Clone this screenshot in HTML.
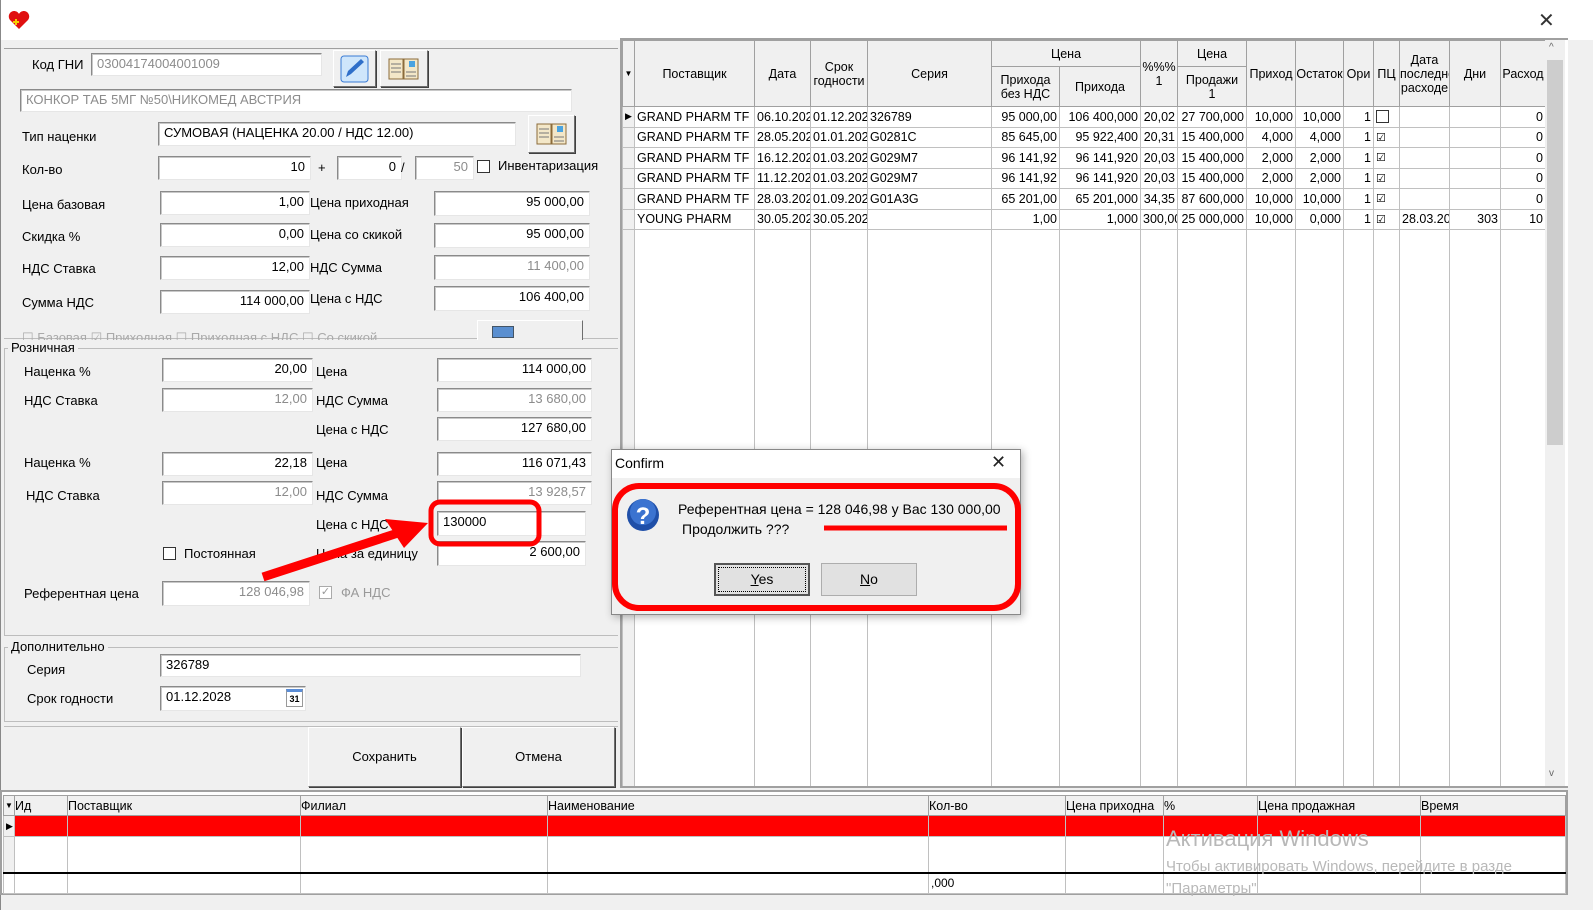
<!DOCTYPE html>
<html><head><meta charset="utf-8">
<style>
*{box-sizing:border-box;margin:0;padding:0}
body{width:1593px;height:910px;overflow:hidden;background:#f0f0f0;font-family:"Liberation Sans",Arial,sans-serif;font-size:13px;color:#000;position:relative}
.a{position:absolute;white-space:nowrap}
.in{position:absolute;background:#fff;border:1px solid;border-color:#8a8a8a #e6e6e6 #e6e6e6 #8a8a8a;box-shadow:inset 1px 1px 0 #c8c8c8;font-size:13px;line-height:20px;padding:0 5px;white-space:nowrap;overflow:hidden}
.r{text-align:right}
.g{color:#8c8c8c}
.lb{position:absolute;white-space:nowrap;font-size:13px}
.btn{position:absolute;background:#f0f0f0;border:1px solid;border-color:#fff #6e6e6e #6e6e6e #fff;box-shadow:1px 1px 0 #404040}
.cb{position:absolute;width:13px;height:13px;background:#fff;border:1px solid #333}
.grp{position:absolute;border:1px solid #bdbdbd;border-right:none}
.gl{position:absolute;background:#f0f0f0;padding:0 3px;font-size:13px}
table{border-collapse:collapse;position:absolute;table-layout:fixed;font-size:12.5px}
td{border:1px solid #c0c0c0;height:20.5px;padding:0 2px;overflow:hidden;white-space:nowrap}
th{border:1px solid #a0a0a0;background:#f0f0f0;font-weight:normal;text-align:center;overflow:hidden;white-space:nowrap;font-size:12.5px;line-height:14px}
</style></head><body>
<!-- title bar -->
<div class="a" style="left:0;top:0;width:1593px;height:40px;background:#fff"></div>
<div class="a" style="left:0;top:0;width:1px;height:910px;background:#888"></div>
<svg class="a" style="left:8px;top:10px" width="22" height="20" viewBox="0 0 22 20"><path d="M11 19 L2 10 C-1 6 2 1 6 1 C8 1 10 2 11 4 C12 2 14 1 16 1 C20 1 23 6 20 10 Z" fill="#e01010"/><path d="M5 12h6M8 9v6" stroke="#f5d000" stroke-width="2"/></svg>
<div class="a" style="left:1538px;top:8px;font-size:20px;color:#333">✕</div>

<!-- left panel -->
<div class="a" style="left:4px;top:48px;width:614px;height:740px;border-top:1px solid #a0a0a0"></div>
<div class="lb" style="left:32px;top:57px">Код ГНИ</div>
<div class="in g" style="left:91px;top:53px;width:231px;height:23px">03004174004001009</div>
<div class="btn" style="left:333px;top:50px;width:43px;height:37px"><svg width="41" height="35"><rect x="7" y="5" width="27" height="26" rx="3" fill="#cfe6fb" stroke="#3a7bd5"/><path d="M12 26 L14 20 L27 8 L30 11 L17 23 Z" fill="#2f6fc9"/></svg></div>
<div class="btn" style="left:380px;top:50px;width:48px;height:37px"><svg width="46" height="35"><path d="M8 8h14v20H8zM23 8h14v20H23z" fill="#f3e7c8" stroke="#8b6b3a"/><rect x="28" y="10" width="6" height="6" fill="#4aa3e0"/><path d="M10 13h10M10 17h10M10 21h10M25 21h10M25 25h10" stroke="#777"/></svg></div>
<div class="in g" style="left:20px;top:89px;width:552px;height:23px">КОНКОР ТАБ 5МГ №50\НИКОМЕД АВСТРИЯ</div>
<div class="lb" style="left:22px;top:129px">Тип наценки</div>
<div class="in" style="left:158px;top:122px;width:358px;height:24px">СУМОВАЯ (НАЦЕНКА 20.00 / НДС 12.00)</div>
<div class="btn" style="left:528px;top:115px;width:47px;height:38px"><svg width="45" height="36"><path d="M8 8h14v20H8zM23 8h14v20H23z" fill="#f3e7c8" stroke="#8b6b3a"/><rect x="28" y="10" width="6" height="6" fill="#4aa3e0"/><path d="M10 13h10M10 17h10M10 21h10M25 21h10M25 25h10" stroke="#777"/></svg></div>
<div class="lb" style="left:22px;top:162px">Кол-во</div>
<div class="in r" style="left:158px;top:156px;width:153px;height:24px">10</div>
<div class="lb" style="left:318px;top:160px">+</div>
<div class="in r" style="left:337px;top:156px;width:65px;height:24px">0</div>
<div class="lb" style="left:401px;top:160px">/</div>
<div class="in r g" style="left:415px;top:156px;width:59px;height:24px">50</div>
<div class="cb" style="left:477px;top:160px"></div>
<div class="lb" style="left:498px;top:158px">Инвентаризация</div>

<div class="lb" style="left:22px;top:197px">Цена базовая</div>
<div class="in r" style="left:160px;top:191px;width:150px;height:24px">1,00</div>
<div class="lb" style="left:310px;top:195px">Цена приходная</div>
<div class="in r" style="left:434px;top:191px;width:156px;height:25px">95 000,00</div>
<div class="lb" style="left:22px;top:229px">Скидка %</div>
<div class="in r" style="left:160px;top:223px;width:150px;height:24px">0,00</div>
<div class="lb" style="left:310px;top:227px">Цена со скикой</div>
<div class="in r" style="left:434px;top:223px;width:156px;height:25px">95 000,00</div>
<div class="lb" style="left:22px;top:261px">НДС Ставка</div>
<div class="in r" style="left:160px;top:256px;width:150px;height:24px">12,00</div>
<div class="lb" style="left:310px;top:260px">НДС Сумма</div>
<div class="in r g" style="left:434px;top:255px;width:156px;height:25px">11 400,00</div>
<div class="lb" style="left:22px;top:295px">Сумма НДС</div>
<div class="in r" style="left:160px;top:290px;width:150px;height:24px">114 000,00</div>
<div class="lb" style="left:310px;top:291px">Цена с НДС</div>
<div class="in r" style="left:434px;top:286px;width:156px;height:25px">106 400,00</div>
<!-- truncated row -->
<div class="a" style="left:4px;top:338px;width:614px;height:1px;background:#bdbdbd"></div>
<div class="a g" style="left:22px;top:330px;height:10px;overflow:hidden;width:460px;color:#aaa">☐ Базовая ☑ Приходная ☐ Приходная с НДС ☐ Со скикой</div>
<div class="btn" style="left:477px;top:320px;width:106px;height:20px;border-bottom:none;box-shadow:none"></div>
<div class="a" style="left:492px;top:326px;width:22px;height:12px;background:#5a8fd0;border:1px solid #456"></div>

<!-- Розничная -->
<div class="grp" style="left:4px;top:348px;width:614px;height:288px"></div>
<div class="gl" style="left:8px;top:340px">Розничная</div>
<div class="lb" style="left:24px;top:364px">Наценка %</div>
<div class="in r" style="left:162px;top:358px;width:151px;height:24px">20,00</div>
<div class="lb" style="left:316px;top:364px">Цена</div>
<div class="in r" style="left:437px;top:358px;width:155px;height:24px">114 000,00</div>
<div class="lb" style="left:24px;top:393px">НДС Ставка</div>
<div class="in r g" style="left:162px;top:388px;width:151px;height:24px">12,00</div>
<div class="lb" style="left:316px;top:393px">НДС Сумма</div>
<div class="in r g" style="left:437px;top:388px;width:155px;height:24px">13 680,00</div>
<div class="lb" style="left:316px;top:422px">Цена с НДС</div>
<div class="in r" style="left:437px;top:417px;width:155px;height:24px">127 680,00</div>
<div class="lb" style="left:24px;top:455px">Наценка %</div>
<div class="in r" style="left:162px;top:452px;width:151px;height:24px">22,18</div>
<div class="lb" style="left:316px;top:455px">Цена</div>
<div class="in r" style="left:437px;top:452px;width:155px;height:24px">116 071,43</div>
<div class="lb" style="left:26px;top:488px">НДС Ставка</div>
<div class="in r g" style="left:162px;top:481px;width:151px;height:24px">12,00</div>
<div class="lb" style="left:316px;top:488px">НДС Сумма</div>
<div class="in r g" style="left:437px;top:481px;width:155px;height:24px">13 928,57</div>
<div class="lb" style="left:316px;top:517px">Цена с НДС</div>
<div class="in" style="left:437px;top:511px;width:149px;height:25px">130000</div>
<div class="in r" style="left:437px;top:541px;width:149px;height:25px">2 600,00</div>
<div class="cb" style="left:163px;top:547px"></div>
<div class="lb" style="left:184px;top:546px">Постоянная</div>
<div class="lb" style="left:316px;top:546px">Цена за единицу</div>
<div class="lb" style="left:24px;top:586px">Референтная цена</div>
<div class="in r g" style="left:162px;top:581px;width:148px;height:25px">128 046,98</div>
<div class="cb" style="left:319px;top:586px;border-color:#aaa;color:#999;font-size:11px;line-height:11px;text-align:center">✓</div>
<div class="lb g" style="left:341px;top:585px;color:#999">ФА НДС</div>
<svg class="a" style="left:0;top:0" width="620" height="620"><rect x="431" y="502" width="108" height="42" rx="9" fill="none" stroke="#f00" stroke-width="5"/><path d="M263 577 L398 533" stroke="#f00" stroke-width="9"/><path d="M385 519 L428 523 L404 548 Z" fill="#f00"/></svg>

<!-- Дополнительно -->
<div class="grp" style="left:4px;top:647px;width:614px;height:75px"></div>
<div class="gl" style="left:8px;top:639px">Дополнительно</div>
<div class="lb" style="left:27px;top:662px">Серия</div>
<div class="in" style="left:160px;top:654px;width:421px;height:23px">326789</div>
<div class="lb" style="left:27px;top:691px">Срок годности</div>
<div class="in" style="left:160px;top:686px;width:146px;height:25px">01.12.2028</div>
<div class="a" style="left:286px;top:689px;width:17px;height:18px;background:#fff;border:1px solid #999;border-top:3px solid #5b8dd6;font-size:9px;font-weight:bold;text-align:center;line-height:14px">31</div>
<div class="a" style="left:4px;top:726px;width:614px;height:1px;background:#bdbdbd"></div>
<div class="btn" style="left:308px;top:727px;width:153px;height:60px;text-align:center;line-height:58px">Сохранить</div>
<div class="btn" style="left:462px;top:727px;width:153px;height:60px;text-align:center;line-height:58px">Отмена</div>

<!-- right grid -->
<div class="a" style="left:620px;top:38px;width:948px;height:750px;background:#fff;border:2px solid #a0a0a0;border-right:none"></div>
<table style="left:622px;top:40px;width:923px">
<colgroup><col style="width:12px"><col style="width:120px"><col style="width:56px"><col style="width:57px"><col style="width:124px"><col style="width:68px"><col style="width:81px"><col style="width:37px"><col style="width:69px"><col style="width:49px"><col style="width:48px"><col style="width:30px"><col style="width:26px"><col style="width:50px"><col style="width:51px"><col style="width:45px"></colgroup>
<tr style="height:26px"><th rowspan="2" style="font-size:8px">▼</th><th rowspan="2">Поставщик</th><th rowspan="2">Дата</th><th rowspan="2">Срок<br>годности</th><th rowspan="2">Серия</th><th colspan="2">Цена</th><th rowspan="2">%%%<br>1</th><th>Цена</th><th rowspan="2">Приход</th><th rowspan="2">Остаток</th><th rowspan="2">Ори</th><th rowspan="2">ПЦ</th><th rowspan="2">Дата<br>последне<br>расходе</th><th rowspan="2">Дни</th><th rowspan="2">Расход</th></tr>
<tr style="height:40px"><th>Прихода<br>без НДС</th><th>Прихода</th><th>Продажи<br>1</th></tr>
<tr><td style="font-size:9px;background:#f0f0f0">▶</td><td>GRAND PHARM TF</td><td>06.10.202</td><td>01.12.202</td><td>326789</td><td class="r" style="text-align:right">95 000,00</td><td style="text-align:right">106 400,000</td><td style="text-align:right">20,02</td><td style="text-align:right">27 700,000</td><td style="text-align:right">10,000</td><td style="text-align:right">10,000</td><td style="text-align:right">1</td><td><div class="cb" style="position:static"></div></td><td></td><td></td><td style="text-align:right">0</td></tr>
<tr><td style="background:#f0f0f0"></td><td>GRAND PHARM TF</td><td>28.05.202</td><td>01.01.202</td><td>G0281C</td><td style="text-align:right">85 645,00</td><td style="text-align:right">95 922,400</td><td style="text-align:right">20,31</td><td style="text-align:right">15 400,000</td><td style="text-align:right">4,000</td><td style="text-align:right">4,000</td><td style="text-align:right">1</td><td style="font-size:11px">☑</td><td></td><td></td><td style="text-align:right">0</td></tr>
<tr><td style="background:#f0f0f0"></td><td>GRAND PHARM TF</td><td>16.12.202</td><td>01.03.202</td><td>G029M7</td><td style="text-align:right">96 141,92</td><td style="text-align:right">96 141,920</td><td style="text-align:right">20,03</td><td style="text-align:right">15 400,000</td><td style="text-align:right">2,000</td><td style="text-align:right">2,000</td><td style="text-align:right">1</td><td style="font-size:11px">☑</td><td></td><td></td><td style="text-align:right">0</td></tr>
<tr><td style="background:#f0f0f0"></td><td>GRAND PHARM TF</td><td>11.12.202</td><td>01.03.202</td><td>G029M7</td><td style="text-align:right">96 141,92</td><td style="text-align:right">96 141,920</td><td style="text-align:right">20,03</td><td style="text-align:right">15 400,000</td><td style="text-align:right">2,000</td><td style="text-align:right">2,000</td><td style="text-align:right">1</td><td style="font-size:11px">☑</td><td></td><td></td><td style="text-align:right">0</td></tr>
<tr><td style="background:#f0f0f0"></td><td>GRAND PHARM TF</td><td>28.03.202</td><td>01.09.202</td><td>G01A3G</td><td style="text-align:right">65 201,00</td><td style="text-align:right">65 201,000</td><td style="text-align:right">34,35</td><td style="text-align:right">87 600,000</td><td style="text-align:right">10,000</td><td style="text-align:right">10,000</td><td style="text-align:right">1</td><td style="font-size:11px">☑</td><td></td><td></td><td style="text-align:right">0</td></tr>
<tr><td style="background:#f0f0f0"></td><td>YOUNG PHARM</td><td>30.05.202</td><td>30.05.202</td><td></td><td style="text-align:right">1,00</td><td style="text-align:right">1,000</td><td style="text-align:right">300,00</td><td style="text-align:right">25 000,000</td><td style="text-align:right">10,000</td><td style="text-align:right">0,000</td><td style="text-align:right">1</td><td style="font-size:11px">☑</td><td>28.03.20</td><td style="text-align:right">303</td><td style="text-align:right">10</td></tr>
<tr style="height:556px"><td style="background:#f0f0f0;height:556px;border-bottom:none"></td><td style="border-bottom:none"></td><td style="border-bottom:none"></td><td style="border-bottom:none"></td><td style="border-bottom:none"></td><td style="border-bottom:none"></td><td style="border-bottom:none"></td><td style="border-bottom:none"></td><td style="border-bottom:none"></td><td style="border-bottom:none"></td><td style="border-bottom:none"></td><td style="border-bottom:none"></td><td style="border-bottom:none"></td><td style="border-bottom:none"></td><td style="border-bottom:none"></td><td style="border-bottom:none"></td></tr>
</table>
<div class="a" style="left:1545px;top:40px;width:20px;height:746px;background:#f0f0f0"></div>
<div class="a" style="left:1547px;top:60px;width:16px;height:385px;background:#cdcdcd"></div>
<div class="a" style="left:1549px;top:42px;font-size:10px;color:#666">^</div>
<div class="a" style="left:1549px;top:768px;font-size:10px;color:#666">v</div>

<!-- bottom grid -->
<div class="a" style="left:0;top:790px;width:1568px;height:105px;background:#fff;border:2px solid #a0a0a0"></div>
<table style="left:3px;top:795px;width:1562px;font-size:12px">
<colgroup><col style="width:11px"><col style="width:53px"><col style="width:233px"><col style="width:247px"><col style="width:381px"><col style="width:137px"><col style="width:98px"><col style="width:94px"><col style="width:163px"><col style="width:145px"></colgroup>
<tr style="height:20px"><th style="font-size:8px">▼</th><th style="text-align:left">Ид</th><th style="text-align:left">Поставщик</th><th style="text-align:left">Филиал</th><th style="text-align:left">Наименование</th><th style="text-align:left">Кол-во</th><th style="text-align:left">Цена приходна</th><th style="text-align:left">%</th><th style="text-align:left">Цена продажная</th><th style="text-align:left">Время</th></tr>
<tr style="background:#f00"><td style="font-size:9px;background:#f0f0f0;height:21px">▶</td><td></td><td></td><td></td><td></td><td></td><td></td><td></td><td></td><td></td></tr>
<tr><td style="background:#f0f0f0;height:36px"></td><td></td><td></td><td></td><td></td><td></td><td></td><td></td><td></td><td></td></tr>
<tr style="border-top:2px solid #000"><td style="height:20px"></td><td></td><td></td><td></td><td></td><td>,000</td><td></td><td></td><td></td><td></td></tr>
</table>
<div class="a" style="left:1166px;top:826px;font-size:22px;color:#b8b8b8">Активация Windows</div>
<div class="a" style="left:1166px;top:858px;font-size:15px;color:#b8b8b8">Чтобы активировать Windows, перейдите в разде</div>
<div class="a" style="left:1166px;top:880px;font-size:15px;color:#b8b8b8">"Параметры"</div>

<!-- dialog -->
<div class="a" style="left:611px;top:449px;width:410px;height:166px;background:#f0f0f0;border:1px solid #888;box-shadow:2px 2px 8px rgba(0,0,0,.3)"></div>
<div class="a" style="left:612px;top:450px;width:408px;height:28px;background:#fff"></div>
<div class="a" style="left:615px;top:455px;font-size:14px">Confirm</div>
<div class="a" style="left:991px;top:452px;font-size:18px;color:#222">✕</div>
<svg class="a" style="left:626px;top:498px" width="34" height="34"><circle cx="17" cy="17" r="16" fill="#1f4fa8"/><circle cx="17" cy="14" r="13" fill="#3b73d0"/><text x="17" y="26" text-anchor="middle" font-family="Liberation Sans" font-weight="bold" font-size="24" fill="#fff">?</text></svg>
<div class="a" style="left:678px;top:501px;font-size:14px">Референтная цена = 128 046,98 у Вас 130 000,00</div>
<div class="a" style="left:682px;top:521px;font-size:14px">Продолжить ???</div>
<div class="a" style="left:714px;top:563px;width:96px;height:33px;border:2px solid #555;background:#e1e1e1;text-align:center;line-height:28px;font-size:14px;outline:1px dotted #000;outline-offset:-5px"><u>Y</u>es</div>
<div class="a" style="left:821px;top:563px;width:96px;height:33px;border:1px solid #adadad;background:#e1e1e1;text-align:center;line-height:31px;font-size:14px"><u>N</u>o</div>
<svg class="a" style="left:610px;top:480px" width="414" height="134"><rect x="5" y="6" width="403" height="122" rx="24" fill="none" stroke="#f00" stroke-width="6"/><path d="M214 48 L397 48" stroke="#f00" stroke-width="5"/></svg>
</body></html>
